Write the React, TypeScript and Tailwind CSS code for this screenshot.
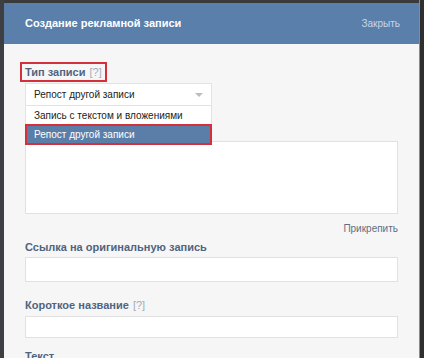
import React from "react";

const font = { fontFamily: '"Liberation Sans", Arial, sans-serif' };

function Label({ text, hint }: { text: string; hint?: boolean }) {
  return (
    <div className="text-[11px] font-bold text-[#4f6480] leading-[16px] whitespace-nowrap">
      {text}
      {hint && <span className="font-normal text-[#a3acb8] ml-[4px]">[?]</span>}
    </div>
  );
}

export default function App() {
  return (
    <div className="w-[424px] h-[358px] overflow-hidden bg-[#3a3a3a] flex" style={font}>
      <div className="w-[4px] shrink-0 bg-[#3d3f42]" />
      <div className="w-[415px] shrink-0 mt-[3px] flex flex-col bg-[#f6f6f6]">
        <div className="h-[41px] shrink-0 bg-[#5a7fab] flex items-center justify-between pl-[21px] pr-[19px]">
          <span className="text-white font-bold text-[11px]">Создание рекламной записи</span>
          <span className="text-[#c8d6e8] text-[10px]">Закрыть</span>
        </div>
        <div className="px-[21px] pt-[18px] flex flex-col">
          <div className="flex">
            <div className="-ml-[5px] border-2 border-[#d3303c] px-[3px]">
              <Label text="Тип записи" hint />
            </div>
          </div>
          <div className="relative w-[187px] mt-[1px]">
            <div className="h-[23px] bg-white border border-[#e3e3e3] flex items-center justify-between pl-[8px] pr-[8px] text-[10px] text-[#222]">
              <span>Репост другой записи</span>
              <svg width="8" height="4" viewBox="0 0 8 4">
                <path d="M0 0 L8 0 L4 4 Z" fill="#b9bec6" />
              </svg>
            </div>
            <div className="absolute left-0 top-[23px] w-[187px] bg-white z-10 flex flex-col">
              <div className="h-[18px] flex items-center pl-[8px] text-[10px] text-[#222] border-x border-[#e3e3e3] whitespace-nowrap">
                Запись с текстом и вложениями
              </div>
              <div className="h-[21px] flex items-center pl-[7px] text-[10px] text-white bg-[#5a7ea8] border-2 border-[#d3303c] whitespace-nowrap">
                Репост другой записи
              </div>
            </div>
          </div>
          <div className="mt-[35px] h-[73px] bg-white border border-[#e1e1e1]" />
          <div className="text-right text-[10px] text-[#5e6f84] mt-[8px] leading-[14px]">Прикрепить</div>
          <div className="mt-[3px]">
            <Label text="Ссылка на оригинальную запись" />
          </div>
          <div className="mt-[2px] h-[25px] bg-white border border-[#e1e1e1]" />
          <div className="mt-[15px]">
            <Label text="Короткое название" hint />
          </div>
          <div className="mt-[3px] h-[22px] bg-white border border-[#e1e1e1]" />
          <div className="mt-[10px]">
            <Label text="Текст" />
          </div>
        </div>
      </div>
      <div className="w-[1px] shrink-0 bg-[#8a8a8a]" />
      <div className="flex-1 bg-[#2f2f30]" />
    </div>
  );
}
